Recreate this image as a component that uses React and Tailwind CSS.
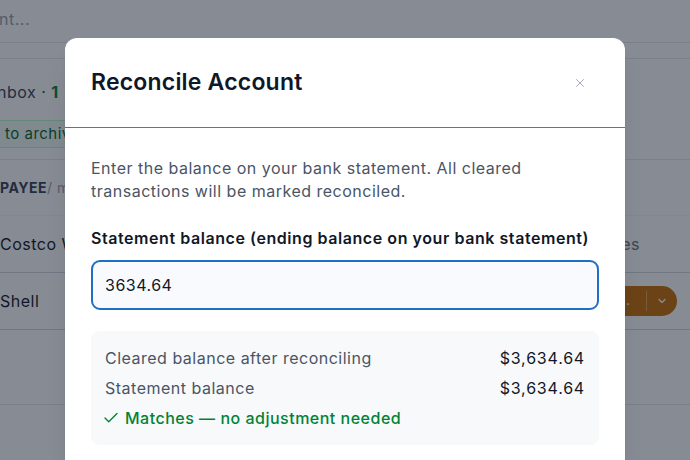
import React, { useState } from 'react';
import { Check, ChevronDown, X } from 'lucide-react';

const Backdrop = () => (
  <div className="w-full h-[460px] overflow-hidden bg-white text-gray-900">
    <div className="h-[43px] flex items-center pb-[5px] border-b border-gray-200 text-[16px] text-gray-400">
      <span className="-ml-[1px]">nt...</span>
    </div>
    <div className="h-[16px] border-b border-gray-200" />
    <div className="h-[61px] flex items-center pt-[5px] text-[16px] text-gray-700">
      <span className="-ml-[3px]">nbox · <span className="font-bold text-green-700">1</span></span>
    </div>
    <div className="w-[320px] h-[28px] flex items-center bg-green-50 border-y border-green-200 text-[15px] text-green-800">
      <span className="pl-[5px]">to archive</span>
    </div>
    <div className="h-[12px] border-b border-gray-200" />
    <div className="h-[56px] flex items-center border-b border-gray-100 text-[14px]">
      <span className="font-bold uppercase text-gray-700">Payee</span>
      <span className="text-gray-400">/ memo</span>
    </div>
    <div className="h-[57px] flex items-center justify-between border-b border-gray-300 text-[16px]">
      <span>Costco Wholesale</span>
      <span className="pr-[50px] text-gray-500">Groceries</span>
    </div>
    <div className="h-[57px] flex items-center justify-between border-b border-gray-300 text-[16px]">
      <span>Shell</span>
      <div className="mr-[13px] flex items-center h-[30px] rounded-full bg-[#c66f04] text-white text-[13px] tracking-normal">
        <span className="px-4 border-r border-[#e0a050]">Categorize…</span>
        <span className="px-[9px] flex items-center"><ChevronDown className="w-3 h-3" strokeWidth={2.5} /></span>
      </div>
    </div>
    <div className="h-[75px] border-b border-gray-200" />
  </div>
);

const App = () => {
  const [balance, setBalance] = useState('3634.64');

  return (
    <div className="relative w-[690px] h-[460px] overflow-hidden font-['Inter','Liberation_Sans',sans-serif] tracking-[0.5px]">
      <Backdrop />
      <div className="absolute inset-0 bg-gray-900/50 flex justify-center">
        <div className="mt-[38px] w-[560px] h-[460px] bg-white rounded-xl shadow-xl">
          <div className="h-[90px] flex items-center justify-between pl-[26px] pr-[37px] border-b border-gray-500">
            <h2 className="text-[23px] font-semibold text-gray-900 tracking-[0.2px]">Reconcile Account</h2>
            <button className="w-4 h-4 flex items-center justify-center text-gray-400">
              <X className="w-[14px] h-[14px]" strokeWidth={1.5} />
            </button>
          </div>
          <div className="px-[26px] pt-[29px]">
            <p className="text-[16px] leading-[23px] text-gray-600">
              Enter the balance on your bank statement. All cleared transactions will be marked reconciled.
            </p>
            <label className="block mt-[23px] text-[16px] leading-6 font-semibold text-gray-900 tracking-[0.56px]">
              Statement balance (ending balance on your bank statement)
            </label>
            <input
              type="text"
              value={balance}
              onChange={(e) => setBalance(e.target.value)}
              className="mt-[10px] w-full h-[50px] px-3 rounded-[9px] border-2 border-[#1f6fc5] bg-[#f8fafd] text-[16px] text-gray-900 outline-none"
            />
            <div className="mt-[21px] rounded-lg bg-[#f7f9fb] px-[14px] pt-[12px] pb-[12px] text-[16px] leading-[30px]">
              <div className="flex justify-between">
                <span className="text-gray-600">Cleared balance after reconciling</span>
                <span className="text-gray-900 tracking-[0.8px]">$3,634.64</span>
              </div>
              <div className="flex justify-between">
                <span className="text-gray-600">Statement balance</span>
                <span className="text-gray-900 tracking-[0.8px]">$3,634.64</span>
              </div>
              <div className="flex items-center gap-[5px] font-medium text-green-700">
                <Check className="-ml-[3px] w-[18px] h-[18px]" strokeWidth={1.8} />
                <span>Matches — no adjustment needed</span>
              </div>
            </div>
          </div>
        </div>
      </div>
    </div>
  );
};

export default App;
